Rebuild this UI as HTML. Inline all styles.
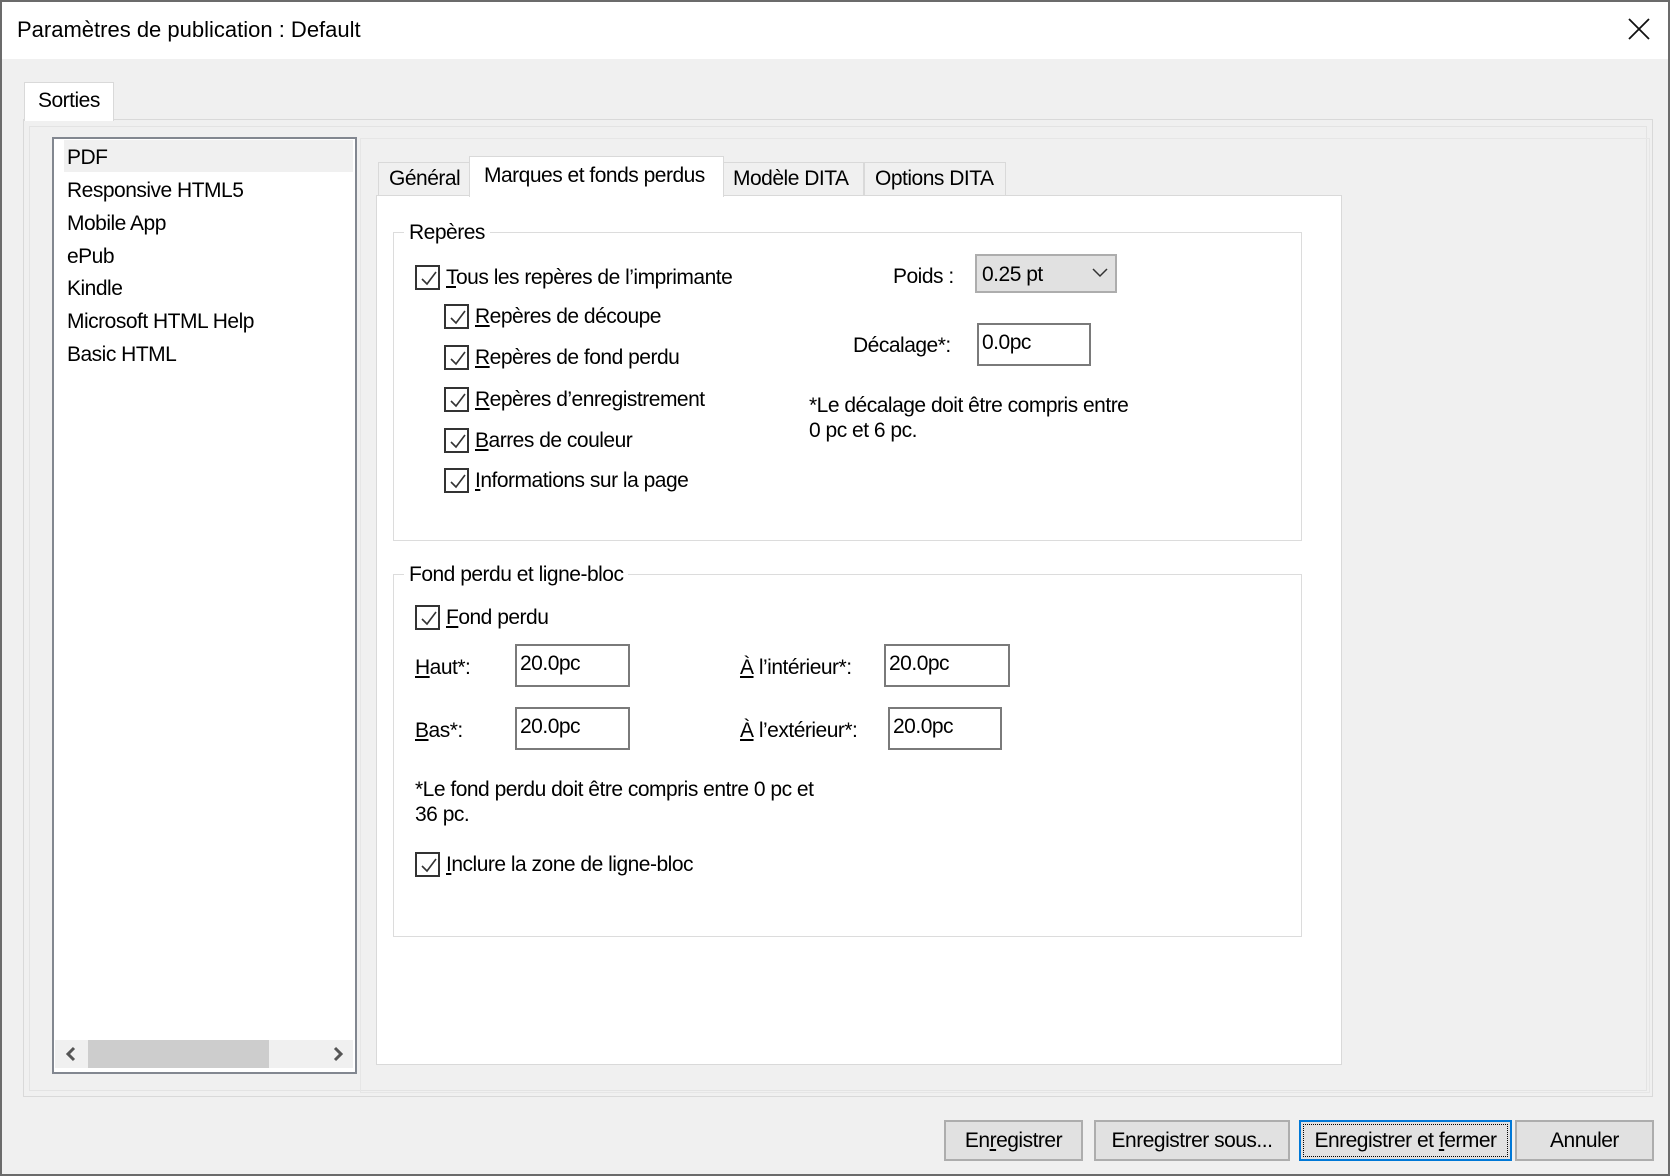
<!DOCTYPE html>
<html><head><meta charset="utf-8">
<style>
*{margin:0;padding:0;box-sizing:border-box}
body{width:1670px;height:1176px;background:#f0f0f0;font-family:"Liberation Sans",sans-serif;font-size:21px;color:#000;position:relative;overflow:hidden}
.a{position:absolute}
.t{position:absolute;white-space:nowrap;line-height:24px;letter-spacing:-0.5px;transform:translateY(1px)}
.cb{position:absolute;width:25px;height:25px;border:2px solid #333;background:#fff}
.cb svg{position:absolute;left:2px;top:2px}
.in{position:absolute;background:#fff;border:2px solid #7a7a7a}
.btn{position:absolute;top:1120px;height:41px;background:#e1e1e1;border:2px solid #adadad;text-align:center;line-height:38px;letter-spacing:-0.5px}
u{text-decoration:underline;text-underline-offset:2px}
</style></head><body>
<div class="a" style="left:0;top:0;width:1670px;height:1176px;border:2px solid #6b6b6b"></div>
<div class="a" style="left:2px;top:2px;width:1666px;height:57px;background:#fff"></div>
<div class="t" style="left:17px;top:18px;font-size:22px;letter-spacing:0;transform:none">Paramètres de publication : Default</div>
<svg class="a" style="left:1628px;top:18px" width="22" height="22"><path d="M1 1L21 21M21 1L1 21" stroke="#111" stroke-width="1.8"/></svg>

<div class="a" style="left:23px;top:119px;width:1630px;height:978px;border:1px solid #d9d9d9;background:#f0f0f0"></div>
<div class="a" style="left:29px;top:126px;width:1618px;height:965px;border:1px solid #e3e3e3"></div>
<div class="a" style="left:24px;top:82px;width:90px;height:39px;background:#fff;border:1px solid #d9d9d9;border-bottom:none"></div>
<div class="t" style="left:38px;top:88px">Sorties</div>

<div class="a" style="left:52px;top:137px;width:305px;height:937px;background:#fff;border:2px solid #828790"></div>
<div class="a" style="left:64px;top:140px;width:289px;height:32px;background:#f0f0f0"></div>
<div class="t" style="left:67px;top:145px">PDF</div>
<div class="t" style="left:67px;top:178px">Responsive HTML5</div>
<div class="t" style="left:67px;top:211px">Mobile App</div>
<div class="t" style="left:67px;top:244px">ePub</div>
<div class="t" style="left:67px;top:276px">Kindle</div>
<div class="t" style="left:67px;top:309px">Microsoft HTML Help</div>
<div class="t" style="left:67px;top:342px">Basic HTML</div>
<div class="a" style="left:55px;top:1040px;width:298px;height:28px;background:#f0f0f0"></div>
<div class="a" style="left:88px;top:1040px;width:181px;height:28px;background:#cdcdcd"></div>
<svg class="a" style="left:64px;top:1046px" width="14" height="16"><path d="M10 2L4 8L10 14" stroke="#555" stroke-width="3" fill="none"/></svg>
<svg class="a" style="left:331px;top:1046px" width="14" height="16"><path d="M4 2L10 8L4 14" stroke="#555" stroke-width="3" fill="none"/></svg>

<div class="a" style="left:360px;top:138px;width:1290px;height:955px;border:1px solid #e6e6e6"></div>
<div class="a" style="left:376px;top:195px;width:966px;height:870px;background:#fff;border:1px solid #d9d9d9"></div>
<div class="a" style="left:378px;top:162px;width:92px;height:34px;background:#f0f0f0;border:1px solid #d9d9d9"></div>
<div class="a" style="left:723px;top:162px;width:141px;height:34px;background:#f0f0f0;border:1px solid #d9d9d9"></div>
<div class="a" style="left:864px;top:162px;width:142px;height:34px;background:#f0f0f0;border:1px solid #d9d9d9"></div>
<div class="a" style="left:469px;top:156px;width:255px;height:41px;background:#fff;border:1px solid #d9d9d9;border-bottom:none"></div>
<div class="t" style="left:389px;top:166px">Général</div>
<div class="t" style="left:484px;top:163px">Marques et fonds perdus</div>
<div class="t" style="left:733px;top:166px">Modèle DITA</div>
<div class="t" style="left:875px;top:166px">Options DITA</div>

<div class="a" style="left:393px;top:232px;width:909px;height:309px;border:1px solid #dcdcdc"></div>
<div class="t" style="left:404px;top:220px;background:#fff;padding:0 5px">Repères</div>
<div class="cb" style="left:415px;top:265px"><svg width="19" height="19"><path d="M3 10L8 15L17 3" stroke="#333" stroke-width="1.6" fill="none"/></svg></div>
<div class="t" style="left:446px;top:265px"><u>T</u>ous les repères de l’imprimante</div>
<div class="cb" style="left:444px;top:304px"><svg width="19" height="19"><path d="M3 10L8 15L17 3" stroke="#333" stroke-width="1.6" fill="none"/></svg></div>
<div class="t" style="left:475px;top:304px"><u>R</u>epères de découpe</div>
<div class="cb" style="left:444px;top:345px"><svg width="19" height="19"><path d="M3 10L8 15L17 3" stroke="#333" stroke-width="1.6" fill="none"/></svg></div>
<div class="t" style="left:475px;top:345px"><u>R</u>epères de fond perdu</div>
<div class="cb" style="left:444px;top:387px"><svg width="19" height="19"><path d="M3 10L8 15L17 3" stroke="#333" stroke-width="1.6" fill="none"/></svg></div>
<div class="t" style="left:475px;top:387px"><u>R</u>epères d’enregistrement</div>
<div class="cb" style="left:444px;top:428px"><svg width="19" height="19"><path d="M3 10L8 15L17 3" stroke="#333" stroke-width="1.6" fill="none"/></svg></div>
<div class="t" style="left:475px;top:428px"><u>B</u>arres de couleur</div>
<div class="cb" style="left:444px;top:468px"><svg width="19" height="19"><path d="M3 10L8 15L17 3" stroke="#333" stroke-width="1.6" fill="none"/></svg></div>
<div class="t" style="left:475px;top:468px"><u>I</u>nformations sur la page</div>

<div class="t" style="left:893px;top:264px">Poids :</div>
<div class="a" style="left:975px;top:254px;width:142px;height:39px;background:#e1e1e1;border:2px solid #adadad"></div>
<div class="t" style="left:982px;top:262px">0.25 pt</div>
<svg class="a" style="left:1092px;top:268px" width="16" height="10"><path d="M1 1L8 8L15 1" stroke="#333" stroke-width="1.5" fill="none"/></svg>
<div class="t" style="left:853px;top:333px">Décalage*:</div>
<div class="in" style="left:977px;top:323px;width:114px;height:43px"></div>
<div class="t" style="left:982px;top:330px">0.0pc</div>
<div class="t" style="left:809px;top:393px">*Le décalage doit être compris entre</div>
<div class="t" style="left:809px;top:418px">0 pc et 6 pc.</div>

<div class="a" style="left:393px;top:574px;width:909px;height:363px;border:1px solid #dcdcdc"></div>
<div class="t" style="left:404px;top:562px;background:#fff;padding:0 5px">Fond perdu et ligne-bloc</div>
<div class="cb" style="left:415px;top:605px"><svg width="19" height="19"><path d="M3 10L8 15L17 3" stroke="#333" stroke-width="1.6" fill="none"/></svg></div>
<div class="t" style="left:446px;top:605px"><u>F</u>ond perdu</div>
<div class="t" style="left:415px;top:655px"><u>H</u>aut*:</div>
<div class="in" style="left:515px;top:644px;width:115px;height:43px"></div>
<div class="t" style="left:520px;top:651px">20.0pc</div>
<div class="t" style="left:740px;top:655px"><u>À</u> l’intérieur*:</div>
<div class="in" style="left:884px;top:644px;width:126px;height:43px"></div>
<div class="t" style="left:889px;top:651px">20.0pc</div>
<div class="t" style="left:415px;top:718px"><u>B</u>as*:</div>
<div class="in" style="left:515px;top:707px;width:115px;height:43px"></div>
<div class="t" style="left:520px;top:714px">20.0pc</div>
<div class="t" style="left:740px;top:718px"><u>À</u> l’extérieur*:</div>
<div class="in" style="left:888px;top:707px;width:114px;height:43px"></div>
<div class="t" style="left:893px;top:714px">20.0pc</div>
<div class="t" style="left:415px;top:777px">*Le fond perdu doit être compris entre 0 pc et</div>
<div class="t" style="left:415px;top:802px">36 pc.</div>
<div class="cb" style="left:415px;top:852px"><svg width="19" height="19"><path d="M3 10L8 15L17 3" stroke="#333" stroke-width="1.6" fill="none"/></svg></div>
<div class="t" style="left:446px;top:852px"><u>I</u>nclure la zone de ligne-bloc</div>

<div class="btn" style="left:944px;width:139px">En<u>r</u>egistrer</div>
<div class="btn" style="left:1094px;width:196px">Enre<u>g</u>istrer sous...</div>
<div class="btn" style="left:1299px;width:213px;border-color:#0078d7"><div style="position:absolute;left:2px;top:2px;right:2px;bottom:2px;border:1px dotted #000"></div>Enregistrer et <u>f</u>ermer</div>
<div class="btn" style="left:1515px;width:139px">Annuler</div>
</body></html>
